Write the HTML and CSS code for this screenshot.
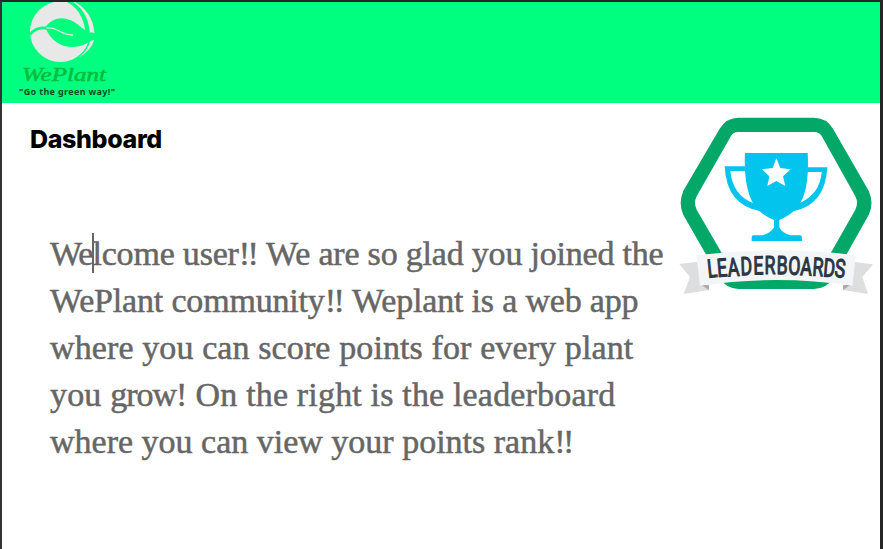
FILE: index.html
```
<!DOCTYPE html>
<html lang="en">
<head>
<meta charset="utf-8">
<title>WePlant</title>
<link rel="stylesheet" href="styles.css">
</head>
<body>
<div class="app">
  <header class="header">
    <svg class="logo" viewBox="0 0 450 303" role="img" aria-label="WePlant">
      <g transform="translate(-6 -6)">
        <circle cx="181" cy="95" r="91" fill="#e8e8e8"/>
        <path d="M211 0C244 22 264 55 266 97M240 173Q270 143 270 116" fill="none" stroke="#00ff7f" stroke-width="9"/>
        <path d="M211 0C242 10 281 45 283 99L269 95C266 54 248 23 211 0Z" fill="#e8e8e8"/>
        <path d="M205 3C240 23 257 57 261 98" fill="none" stroke="#00ff7f" stroke-width="9"/>
        <path d="M234 174Q277 148 282 120L271 122Q265 150 234 174Z" fill="#e8e8e8"/>
        <path d="M136 82C164 43 205 50 238 77C256 91 269 100 285 101Q279 113 271 123C235 151 163 153 136 82Z" fill="#00ff7f"/>
        <path d="M90 104Q110 79 141 85" fill="none" stroke="#00ff7f" stroke-width="8"/>
        <path d="M139 84C173 79 183 107 219 105" fill="none" stroke="#e8e8e8" stroke-width="4"/>
        <text class="wordmark" x="66" y="244" textLength="252" lengthAdjust="spacingAndGlyphs">WePlant</text>
        <text class="tagline" x="57" y="285" textLength="288">"Go the green way!"</text>
      </g>
    </svg>
  </header>
  <main class="content">
    <section class="intro">
      <h1 class="title">Dashboard</h1>
      <p class="welcome">
        <span class="line line-1"><span class="lead">We</span><span class="caret"></span>lcome user<span class="bang">!!</span> We are so glad you joined the</span>
        <span class="line line-2">WePlant community<span class="bang">!!</span> Weplant is a web app</span>
        <span class="line line-3">where you can score points for every plant</span>
        <span class="line line-4">you <span class="lead">grow</span><span class="bang">!</span> On the right is the leaderboard</span>
        <span class="line line-5">where you can view your points rank<span class="bang">!!</span></span>
      </p>
    </section>
    <svg class="badge" viewBox="0 0 639 600" role="img" aria-label="Leaderboards">
      <path fill="#03a768" fill-rule="evenodd" d="M206 38H431Q469 38 489 71L596 257Q613 295 596 330L489 520Q470 552 431 552H206Q170 552 149 520L40 330Q24 295 40 257L149 71Q169 38 206 38ZM204 81Q190 81 183 93L80 274Q70 294 80 314L183 492Q191 508 205 508H431Q446 508 455 492L556 314Q566 294 556 274L455 93Q447 81 433 81Z"/>
      <g fill="#02c4ed">
        <path d="M225 144H413Q417 222 403 266Q386 321 328 345V367Q337 386 362 391H390Q396 391 396 397V408H245V397Q245 391 251 391H278Q301 386 312 367V345Q255 323 238 270Q221 220 225 144Z"/>
        <path fill-rule="evenodd" d="M164 184H240V198H181Q188 271 251 295L271 319Q169 300 164 184ZM472 187H403V201H455Q450 267 389 294L370 319Q466 300 472 187Z"/>
      </g>
      <path fill="#fff" d="M319 160L331 189L362 193L339 214L346 243L319 228L292 243L298 214L276 193L308 189Z"/>
      <path fill="#dedede" d="M28 477L83 470L98 533L117 555L41 567L60 516ZM609 478L555 471L539 533L519 555L594 567L577 516Z"/>
      <path fill="#aaa" d="M89 536L117 541V555ZM547 536L519 541V555Z"/>
      <path fill="#f4f5f7" d="M79 451Q319 421 558 451L547 542Q319 508 90 542Z"/>
      <g class="ribbon-text" text-anchor="middle">
        <text transform="translate(129 517) rotate(-6) scale(.7 1)">L</text>
        <text transform="translate(158 515) rotate(-5) scale(.7 1)">E</text>
        <text transform="translate(192 513) rotate(-4) scale(.7 1)">A</text>
        <text transform="translate(230 510) rotate(-2) scale(.7 1)">D</text>
        <text transform="translate(266 508) rotate(-1) scale(.7 1)">E</text>
        <text transform="translate(300 507) scale(.7 1)">R</text>
        <text transform="translate(336 507) rotate(1) scale(.7 1)">B</text>
        <text transform="translate(372 509) rotate(2) scale(.7 1)">O</text>
        <text transform="translate(407 511) rotate(3) scale(.7 1)">A</text>
        <text transform="translate(442 513) rotate(4) scale(.7 1)">R</text>
        <text transform="translate(476 515) rotate(5) scale(.7 1)">D</text>
        <text transform="translate(508 517) rotate(6) scale(.7 1)">S</text>
      </g>
    </svg>
  </main>
</div>
</body>
</html>
```
FILE: styles.css
```
* { box-sizing: border-box; }
body { margin: 0; background: #fff; overflow: hidden; }
.app {
  height: 549px;
  border: solid #262626;
  border-width: 2px 3px 0 2px;
  border-left-color: #333;
}
.header { height: 101px; background: #00ff7f; }
.logo { display: block; width: 150px; height: 101px; }
.wordmark { font: italic 58px "Liberation Serif", serif; fill: #08bd3b; stroke: #08bd3b; stroke-width: 1.5; }
.tagline { font: bold 27px "Noto Sans", sans-serif; fill: #064f24; }
.content { display: flex; }
.intro { flex: none; width: 668px; padding: 20px 0 0 28px; }
.title { margin: 0; font: 800 25px/32px Inter, sans-serif; letter-spacing: -.35px; color: #000; }
.welcome {
  width: 613px;
  margin: 75px 0 0 20px;
  font: 34px/47px "Liberation Serif", serif;
  color: #666;
}
.line { display: block; width: max-content; white-space: nowrap; -webkit-text-stroke: .5px #666; }
.line-1 { letter-spacing: -.2px; }
.line-2 { letter-spacing: -.18px; }
.line-3 { letter-spacing: .11px; }
.line-4 { letter-spacing: .17px; }
.lead { letter-spacing: -1px; }
.bang { margin-right: 2px; letter-spacing: -2.5px; }
.caret {
  display: inline-block;
  width: 2px;
  height: 40px;
  margin-right: -2px;
  vertical-align: -8px;
  background: #666;
}
.badge { flex: none; width: 213px; height: 200px; margin-top: 2px; }
.ribbon-text { font: 76px Roboto, sans-serif; fill: #2b3644; stroke: #2b3644; stroke-width: 3.5; }
```
